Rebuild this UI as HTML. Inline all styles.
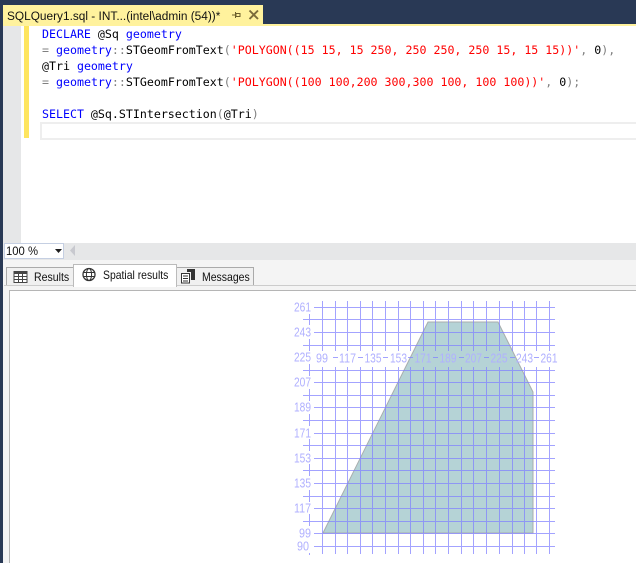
<!DOCTYPE html>
<html><head><meta charset="utf-8"><style>
html,body{margin:0;padding:0;background:#fff}
#r{position:relative;width:636px;height:563px;overflow:hidden;background:#fff;font-family:"Liberation Sans",sans-serif}
#r div{position:absolute}
.c{left:42px;font:11.62px/16px "DejaVu Sans Mono",monospace;white-space:pre;color:#000}
.b{color:#0000ff}.g{color:#808080}.m{color:#ff0000}.k{color:#0000ff}
.t{font-size:12px;line-height:16px;color:#111;white-space:pre;transform-origin:0 0}
text{font-family:"Liberation Sans",sans-serif;font-size:13px;fill:#b0b0ff}
</style></head><body><div id="r">
<div style="left:0;top:0;width:636px;height:24px;background:#293955"></div>
<div style="left:0;top:0;width:3px;height:563px;background:#293955"></div>
<div style="left:3px;top:5px;width:260px;height:19px;background:#fff29d"></div>
<div style="left:3px;top:24px;width:633px;height:2px;background:#fff29d"></div>
<div class="t" style="left:7px;top:8px;font-size:12.35px;transform:scaleX(.96)">SQLQuery1.sql - INT...(intel\admin (54))*</div>
<svg style="position:absolute;left:230px;top:9px" width="30" height="12"><path d="M2 6H5M5.5 3V9M6 4.5H10V7.5H6Z" fill="none" stroke="#6b5f2a"/><path d="M19.5 1.5L28 10M28 1.5L19.5 10" stroke="#7a6b3a" stroke-width="1.9" fill="none"/></svg>
<div style="left:3px;top:26px;width:18px;height:217px;background:#e6e7e8"></div>
<div style="left:24px;top:26px;width:5px;height:112px;background:#fee55f"></div>
<div style="left:40px;top:122px;width:596px;height:14px;border:2px solid #eee;border-right:0"></div>
<div class="c" style="top:26px"><span class="b">DECLARE</span> @Sq <span class="b">geometry</span></div>
<div class="c" style="top:42px"><span class="g">=</span> <span class="k">geometry</span><span class="g">::</span>STGeomFromText<span class="g">(</span><span class="m">'POLYGON((15 15, 15 250, 250 250, 250 15, 15 15))'</span><span class="g">,</span> 0<span class="g">),</span></div>
<div class="c" style="top:58px">@Tri <span class="k">geometry</span></div>
<div class="c" style="top:74px"><span class="g">=</span> <span class="k">geometry</span><span class="g">::</span>STGeomFromText<span class="g">(</span><span class="m">'POLYGON((100 100,200 300,300 100, 100 100))'</span><span class="g">,</span> 0<span class="g">);</span></div>
<div class="c" style="top:106px"><span class="b">SELECT</span> @Sq.STIntersection<span class="g">(</span>@Tri<span class="g">)</span></div>

<div style="left:3px;top:243px;width:633px;height:17px;background:#e6e7e8"></div>
<div style="left:4px;top:243px;width:58px;height:14px;background:#fff;border:1px solid #c5cfe2"></div>
<div class="t" style="left:6px;top:243px;transform:scaleX(.94)">100 %</div>
<svg style="position:absolute;left:54px;top:249px" width="9" height="5"><path d="M1 0H8L4.5 4Z" fill="#1e1e1e"/></svg>
<svg style="position:absolute;left:69px;top:245px" width="8" height="12"><path d="M6 0V11L1 5.5Z" fill="#c8c9cf"/></svg>

<div style="left:3px;top:260px;width:633px;height:303px;background:#f4f4f4"></div>
<div style="left:6px;top:267px;width:66px;height:18px;background:#f0f0f0;border:1px solid #aaa;border-bottom:0"></div>
<div style="left:176px;top:267px;width:76px;height:18px;background:#f0f0f0;border:1px solid #aaa;border-bottom:0"></div>
<div style="left:4px;top:285px;width:632px;height:1px;background:#ccc"></div>
<div style="left:73px;top:264px;width:102px;height:22px;background:#fff;border:1px solid #bbb;border-bottom:0"></div>
<svg style="position:absolute;left:13px;top:270px" width="16" height="14"><path d="M1 1.5H14V12.5H1Z" fill="#fff" stroke="#444"/><path d="M1 1.5H14V4H1Z" fill="#444"/><path d="M1 6.5H14M1 9.5H14M5.5 2V12.5M9.5 2V12.5" stroke="#444" fill="none"/></svg>
<div class="t" style="left:34px;top:269px;transform:scaleX(.88)">Results</div>
<svg style="position:absolute;left:81px;top:267px" width="16" height="15"><circle cx="8" cy="7.5" r="6" fill="none" stroke="#333" stroke-width="1.3"/><ellipse cx="8" cy="7.5" rx="2.6" ry="6" fill="none" stroke="#333"/><path d="M2 5.5H14M2 9.5H14" stroke="#333"/></svg>
<div class="t" style="left:103px;top:267px;transform:scaleX(.867)">Spatial results</div>
<svg style="position:absolute;left:180px;top:268px" width="18" height="16"><path d="M1.5 5.5H9.5V15H1.5Z" fill="#fff" stroke="#333"/><path d="M3 8H8M3 10.5H8M3 13H8" stroke="#333"/><path d="M7 1H15V12H11V4H7Z" fill="#333"/></svg>
<div class="t" style="left:202px;top:269px;transform:scaleX(.873)">Messages</div>

<div style="left:9px;top:290px;width:627px;height:273px;background:#fff;border-top:1px solid #b5b5b5;border-left:1px solid #b5b5b5"></div>

<svg style="position:absolute;left:0;top:0" width="636" height="563">
<path d="M323 533L428 322H498L533 392V533Z" fill="#b5d3d6" stroke="#a8adad" stroke-width="1"/>
<path fill="none" stroke="#8080ff" stroke-opacity=".72" stroke-width="1" d="
M322.5 301V351M322.5 367V554M335.5 301V351M335.5 367V554M347.5 301V351M347.5 367V554M360.5 301V351M360.5 367V554M372.5 301V351M372.5 367V554M385.5 301V351M385.5 367V554M398.5 301V351M398.5 367V554M410.5 301V351M410.5 367V554M423.5 301V351M423.5 367V554M435.5 301V351M435.5 367V554M448.5 301V351M448.5 367V554M461.5 301V351M461.5 367V554M473.5 301V351M473.5 367V554M486.5 301V351M486.5 367V554M499.5 301V351M499.5 367V554M512.5 301V351M512.5 367V554M524.5 301V351M524.5 367V554M536.5 301V351M536.5 367V554M549.5 301V351M549.5 367V554
M314 307.5H555M303 319.5H555M314 332.5H555M303 345.5H555M303 370.5H555M314 382.5H555M303 395.5H555M314 407.5H555M303 420.5H555M314 433.5H555M303 445.5H555M314 458.5H555M303 470.5H555M314 483.5H555M303 496.5H555M314 508.5H555M303 521.5H555M314 533.5H555M314 546.5H555
M333 357.5H338M358 357.5H363M383 357.5H388M408 357.5H413M433 357.5H438M459 357.5H464M484 357.5H489M510 357.5H515M534 357.5H539
M309.5 314V325M309.5 339V351M309.5 364V376M309.5 389V401M309.5 414V426M309.5 439V451M309.5 464V476M309.5 490V502M309.5 514V526M309.5 553V555"/>
<g text-anchor="end">
<text x="311" y="311.5" textLength="17" lengthAdjust="spacingAndGlyphs">261</text><text x="311" y="336.5" textLength="17" lengthAdjust="spacingAndGlyphs">243</text><text x="311" y="361.5" textLength="17" lengthAdjust="spacingAndGlyphs">225</text><text x="311" y="386.5" textLength="17" lengthAdjust="spacingAndGlyphs">207</text><text x="311" y="411.5" textLength="17" lengthAdjust="spacingAndGlyphs">189</text><text x="311" y="437.5" textLength="17" lengthAdjust="spacingAndGlyphs">171</text><text x="311" y="462.5" textLength="17" lengthAdjust="spacingAndGlyphs">153</text><text x="311" y="487.5" textLength="17" lengthAdjust="spacingAndGlyphs">135</text><text x="311" y="512.5" textLength="17" lengthAdjust="spacingAndGlyphs">117</text><text x="311" y="537.5" textLength="12" lengthAdjust="spacingAndGlyphs">99</text><text x="309" y="550.5" textLength="12" lengthAdjust="spacingAndGlyphs">90</text>
</g>
<g text-anchor="middle">
<text x="322" y="362.5" textLength="12" lengthAdjust="spacingAndGlyphs">99</text><text x="347.5" y="362.5" textLength="17" lengthAdjust="spacingAndGlyphs">117</text><text x="373" y="362.5" textLength="17" lengthAdjust="spacingAndGlyphs">135</text><text x="398.5" y="362.5" textLength="17" lengthAdjust="spacingAndGlyphs">153</text><text x="423" y="362.5" textLength="17" lengthAdjust="spacingAndGlyphs">171</text><text x="448" y="362.5" textLength="17" lengthAdjust="spacingAndGlyphs">189</text><text x="473.5" y="362.5" textLength="17" lengthAdjust="spacingAndGlyphs">207</text><text x="499" y="362.5" textLength="17" lengthAdjust="spacingAndGlyphs">225</text><text x="524.5" y="362.5" textLength="17" lengthAdjust="spacingAndGlyphs">243</text><text x="549" y="362.5" textLength="17" lengthAdjust="spacingAndGlyphs">261</text>
</g>
</svg>
</div></body></html>
